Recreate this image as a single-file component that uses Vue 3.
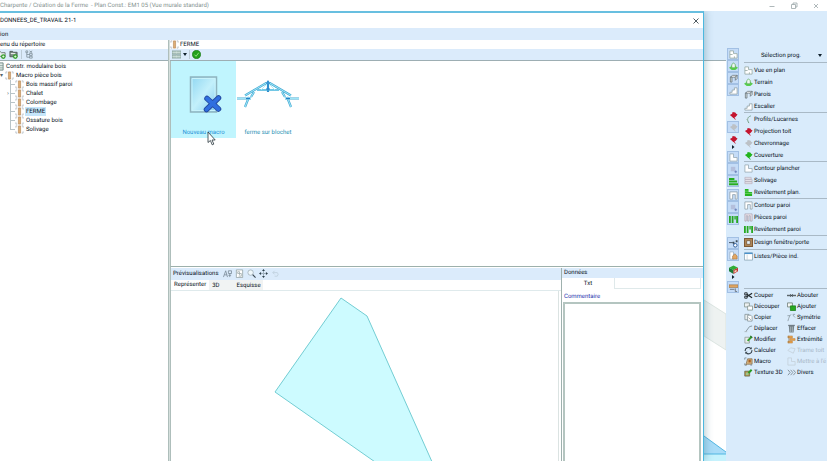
<script setup>
import { ref } from 'vue'

const search = ref('prog')
const comment = ref('')
const selectedNode = ref('FERME')
const activeTab = ref('Représenter')

const pin = (c) =>
  `<path d="M1 4.500 3.500 3 4 1l3 .6 1 1.400 1.500 1-2 2.500L5 8 3 6z" fill="${c}"/><path d="M5.500 7 7 9.500" stroke="${c}" fill="none"/>`

const icons = {
  beam: '<path d="M1 3V1h1.500M7.500 1H9v2M1 7v2h1.500M7.500 9H9V7" fill="none" stroke="#9aa8b2" stroke-width=".7"/><path d="M3.800 1h2.400v8H3.800z" fill="#dfae76" stroke="#ad7d48" stroke-width=".6"/>',
  root: '<path d="M1 1h8v8H1z" fill="#dfe9e6" stroke="#6d8580"/><path d="M1 4h8M1 6.500h8M4 1v8" stroke="#7f9992" stroke-width=".8"/>',
  addFolder: '<path d="M1 2h3l1 1h4v4H1z" fill="#e9f0ee" stroke="#59665f" stroke-width=".9"/><circle cx="7" cy="7.300" r="2.600" fill="#36a02c"/><path d="M7 6v2.600M5.700 7.300h2.600" stroke="#fff" stroke-width=".8"/>',
  filledFolder: '<path d="M1 1.500h3l1 1h4v5H1z" fill="#7c8b86" stroke="#48544f" stroke-width=".9"/><path d="M2 4h5" stroke="#fff"/><circle cx="7" cy="7.300" r="2.600" fill="#36a02c"/><path d="M7 6v2.600M5.700 7.300h2.600" stroke="#fff" stroke-width=".8"/>',
  treeCut: '<path d="M1 1h2v2H1zM2 3v5h3M2 5h3M5 4h3v2H5zM5 7h3v2H5zM5 1l3 2M8 1 5 3" fill="none" stroke="#7f8f99" stroke-width=".9"/>',
  gridView: '<path d="M0 1h10v3.500H0zM0 5.500h10V9H0z" fill="#b5cbc5"/><path d="M0 2.700h10M0 7.300h10M5 1v8" stroke="#d4e2de" stroke-width=".7"/><path d="M0 1h10v3.500H0zM0 5.500h10V9H0z" fill="none" stroke="#7d978f" stroke-width=".7"/>',
  check: '<circle cx="5" cy="5" r="4.700" fill="#23a01c" stroke="#147010" stroke-width=".6"/><path d="M2.800 5.200 4.500 7l3-4" fill="none" stroke="#8fe27c" stroke-width="1.100"/>',
  plan: '<path d="M1 1h4v3h4v5H1z" fill="#fff" stroke="#98a9a5" stroke-width=".9"/><path d="M1 5h3M6 9V7" stroke="#98a9a5" stroke-width=".9"/>',
  terrain: '<path d="M0 6.500 3 4.500h4l3 2L7 9H3z" fill="#58cf4d"/><path d="M5 1 7 3v3.500H3V3z" fill="#eef6f0" stroke="#55a850" stroke-width=".8"/>',
  walls: '<path d="M1.500 3.500 4 1.500h5L7 3.500z" fill="#fff" stroke="#5d6a70" stroke-width=".8"/><path d="M1.500 3.500h1.800V9H1.500zM7 3.500l2-2v3.500L7 7z" fill="#dfe5e5" stroke="#5d6a70" stroke-width=".8"/>',
  stairs: '<path d="M1 9V7h2.500V4.500H6V2h3v7z" fill="#fff" stroke="#8a9a9f" stroke-width=".8"/>',
  profile: '<path d="M7.500 1C3.500 2.500 3 5 5.500 9" fill="none" stroke="#6f9c82" stroke-width="1.100"/><path d="M2.500 5.500 5 3" stroke="#b8c6c0"/>',
  pinRed: pin('#c4152f'),
  pinGrey: pin('#bcc1c6'),
  pinGreen: pin('#22b41d'),
  floor: '<path d="M1 1h4v4h4v4H1z" fill="#fff" stroke="#9aabb5" stroke-width=".9"/>',
  joist: '<path d="M1 1.500h7v2H1zM1 4h8v2H1zM1 6.500h8v2H1z" fill="#eceaf0" stroke="#b2a9b8" stroke-width=".7"/>',
  deck: '<path d="M1 1h4v3.500h4V9H1z" fill="#27b321"/><path d="M1 3.500h4M1 6h8" stroke="#a2eb9a" stroke-width=".6"/>',
  wallOutline: '<path d="M1 1h8v8H7V4H4v5H1z" fill="#fff" stroke="#8a9aa3" stroke-width=".8"/>',
  wallParts: '<path d="M1 1h8v8H7V3H5.500v6H4V3H2.500v6H1z" fill="#eee8ee" stroke="#aaa0ae" stroke-width=".8"/>',
  wallDeck: '<path d="M0 1h2v8H0zM3 1h2v8H3zM6 1h1.500v4H6zM8 1h2v8H8z" fill="#27a822"/>',
  windowDoor: '<path d="M0 0h10v10H0z" fill="#7e5a35"/><path d="M1.200 1.200h7.600v7.600H1.200z" fill="#b48b5b"/><path d="M3 3h4v4H3z" fill="#e9f4fb" stroke="#5d4226" stroke-width=".7"/>',
  lists: '<path d="M.5 1h9v8h-9z" fill="#fff" stroke="#89a5b6" stroke-width=".9"/><path d="M.5 1.500h9" stroke="#4a92cc" stroke-width="1.600"/><path d="M3.500 3v6" stroke="#bccad2" stroke-width=".8"/>',
  cut: '<path d="M3 3.500 9 7.500M3 6.500 9 2.500" stroke="#1f2628" stroke-width="1.300"/><path d="M.8 2h2.700v2.300H.8zM.8 5.800h2.700V8H.8z" fill="none" stroke="#1f2628"/>',
  join: '<path d="M0 5h10" stroke="#5b666b" stroke-width="1.600"/><path d="M3.500 3.500 5 5 3.500 6.500M6.500 3.500 5 5l1.500 1.500" fill="none" stroke="#384246" stroke-width=".8"/>',
  trim: '<path d="M.5 1h5.500v4.500H.5z" fill="#eef1f0" stroke="#85938e" stroke-width=".9"/><path d="M4 4.500h5.500V9H4z" fill="#fff" stroke="#85938e" stroke-width=".9"/>',
  add: '<path d="M.5 1h5.500v4.500H.5z" fill="#f4f7f5" stroke="#6d7b75" stroke-width=".9"/><path d="M3.800 4.300h5.700V9.500H3.800z" fill="#28a91f" stroke="#157a10" stroke-width=".8"/>',
  copy: '<path d="M1 1.500h4.500v6H1z" fill="#e9eeee" stroke="#7c8b90" stroke-width=".8"/><path d="M4 2.500h3.500L9 4v5H4z" fill="#fff" stroke="#7c8b90" stroke-width=".8"/><path d="m5 5 3 3" stroke="#7c8b90" stroke-width=".7"/>',
  mirror: '<path d="M1 9C2 5 3 3 4.500 1.500M9 5C8 4 7 3 6.500 2" fill="none" stroke="#8c9aa2" stroke-width=".9"/><path d="M6.500 1.500H9M.5 3h3" fill="none" stroke="#7f8e96" stroke-width=".8"/>',
  move: '<path d="M2 8.500 6 3l3-.8" fill="none" stroke="#7c8a90" stroke-width=".9"/><path d="M.5 8.500h3" stroke="#a7b2b6" stroke-width=".8"/>',
  erase: '<path d="M2 2h6l-.6 7.500H2.600z" fill="#76838a"/><path d="M1.300 1.500h7.400" stroke="#566269"/><path d="M4 3v6M6 3v6" stroke="#c9d2d6" stroke-width=".6"/>',
  edit: '<path d="M1 2.500h5V9H1z" fill="#e8eceb" stroke="#8a938f" stroke-width=".8"/><path d="M4 6.500 8 2.500" stroke="#2f9e2a" stroke-width="2"/><path d="m7 1 2.200 2.100" stroke="#1c6d1a" stroke-width="1.400"/>',
  extremity: '<path d="M1 1h5v2.300H1zM3 4h6v2H3zM1 6.800h5V9H1z" fill="#e8a24f" stroke="#b97a2e" stroke-width=".5"/><path d="M2 1v8" stroke="#857357" stroke-width=".6"/>',
  calc: '<path d="M1.300 5.500A3.600 3.600 0 0 1 7.700 3M8.700 4.500A3.600 3.600 0 0 1 2.300 7.300" fill="none" stroke="#38444c" stroke-width="1.200"/><path d="M8.600 1v2.600H6zM1.400 9V6.500H4z" fill="#38444c"/>',
  roofGrid: '<path d="M1 5 4 2l5 1-2 5z" fill="none" stroke="#c3d0da" stroke-width=".9"/>',
  macro: '<path d="M2 9 4 2h5v6H4z" fill="#d5b27e" stroke="#7d6a4b" stroke-width=".8"/><path d="M.8 3V1h2M.8 7v2h2M7 9h2" fill="none" stroke="#6f7f86" stroke-width=".8"/><path d="M5 3h2.500v3H5z" fill="#a85f21"/>',
  update: '<path d="M1 1h4v4h4v4H1z" fill="none" stroke="#c5d1da" stroke-width=".9"/>',
  texture: '<path d="M.8 3.500h5.500V9H.8z" fill="#b7873e" stroke="#5e6d50" stroke-width=".8"/><path d="M2 5h3v3H2z" fill="#9cc78c"/><path d="M5 5.500 8.500 2" stroke="#279b22" stroke-width="2.200"/>',
  misc: '<path d="m1 2 2.500 3L1 8M4 2l2.500 3L4 8M7 2l2.500 3L7 8" fill="none" stroke="#8795a0" stroke-width="1.100"/>',
  greenBars: '<path d="M0 1h6v2.200H0zM0 4h9v2.200H0zM0 7h10v2.200H0z" fill="#27ae21"/>',
  dotted: '<path d="M2 2h5v5H2z" fill="#b4bfdc"/><path d="M7.500 6v3M6 7.500h3" stroke="#5b6fae" stroke-width=".8"/>',
  nodes: '<path d="M0 4h4l3 2.500" fill="none" stroke="#3b4b58"/><circle cx="7" cy="7" r="2" fill="#fff" stroke="#2f5f9e" stroke-width="1.100"/><path d="M4 3h2v2H4zM7.500 1.500h2v2h-2z" fill="#3b4b58"/>',
  house: '<path d="M1 1h4v8H1z" fill="#fff" stroke="#8ba3b8" stroke-width=".7"/><path d="M4 5.500 6.500 3 9 5.500V9H4z" fill="#e4a763" stroke="#9e6c33" stroke-width=".6"/>',
  cube: '<path d="m0 3 5-2.500L10 3 5 5.500z" fill="#2fae35"/><path d="m0 3 5 2.500V10L0 7z" fill="#1b7c37"/><path d="m5 5.500 5-2.500v4l-5 3z" fill="#c5342f"/><path d="m6 6.500 2.500-1.200v2L6 8.500z" fill="#f3dbc0"/>',
  rafter: '<path d="M0 2h10v3H0z" fill="#e0a45f" stroke="#8f6c42" stroke-width=".6"/><path d="M1 7h5" stroke="#69727c"/><path d="M7 6v3.500h2" stroke="#69727c" fill="none"/>',
  font: '<path d="M.5 9 3 2l2 7M1.500 6.500h3M6 2h3.500v3H6zM6 7h3M7.500 5v4" fill="none" stroke="#7a8b98" stroke-width=".9"/>',
  page: '<path d="M1.500 1h7v8.500h-7z" fill="#fff" stroke="#8b9a9c" stroke-width=".8"/><path d="M3 3h2v2H3zM5 7V5h2v3H4" fill="none" stroke="#8b9a9c" stroke-width=".7"/>',
  magnifier: '<circle cx="4" cy="4" r="3" fill="#eff8fc" stroke="#9aa8b1" stroke-width=".8"/><path d="M6.300 6.300 9.500 9.500" stroke="#39464f" stroke-width="1.300"/>',
  pan: '<path d="M5 2v6M2 5h6" stroke="#5e707b" stroke-width=".8" stroke-dasharray="1 .7"/><path d="M5 0 6.600 2.300H3.400zM5 10 3.400 7.700h3.200zM0 5l2.300-1.600v3.200zM10 5 7.700 6.600V3.400z" fill="#2c3f4a"/>',
  undo: '<path d="M2 4h5q2 1.500 0 4H4M4 2 2 4l2 2" fill="none" stroke="#c2d3df"/>'
}

const tree = [
  { label: 'Constr. modulaire bois', level: 0, icon: 'root' },
  { label: 'Macro pièce bois', level: 1, icon: 'beam', mark: '▾' },
  { label: 'Bois massif paroi', level: 2, icon: 'beam' },
  { label: 'Chalet', level: 2, icon: 'beam', mark: '›' },
  { label: 'Colombage', level: 2, icon: 'beam' },
  { label: 'FERME', level: 2, icon: 'beam' },
  { label: 'Ossature bois', level: 2, icon: 'beam' },
  { label: 'Solivage', level: 2, icon: 'beam', last: true }
]

const strip = [
  { icons: ['plan', 'terrain', 'walls', 'stairs'], boxed: true },
  { icons: ['pinRed', 'pinGrey', 'pinRed'], middle: true, arrow: true },
  { icons: ['floor', 'dotted', 'greenBars'], boxed: true },
  { icons: ['wallOutline', 'dotted', 'wallDeck'], boxed: true },
  { icons: ['nodes', 'house'], boxed: true },
  { icons: ['cube'], arrow: true },
  { icons: ['rafter'], boxed: true }
]

const programs = [
  [['plan', 'Vue en plan'], ['terrain', 'Terrain'], ['walls', 'Parois'], ['stairs', 'Escalier']],
  [['profile', 'Profils/Lucarnes'], ['pinRed', 'Projection toit'], ['pinGrey', 'Chevronnage'], ['pinGreen', 'Couverture']],
  [['floor', 'Contour plancher'], ['joist', 'Solivage'], ['deck', 'Revêtement plan.']],
  [['wallOutline', 'Contour paroi'], ['wallParts', 'Pièces paroi'], ['wallDeck', 'Revêtement paroi']],
  [['windowDoor', 'Design fenêtre/porte']],
  [['lists', 'Listes/Pièce ind.']]
]

const tools = [
  ['cut', 'Couper'], ['join', 'Abouter'],
  ['trim', 'Découper'], ['add', 'Ajouter'],
  ['copy', 'Copier'], ['mirror', 'Symétrie'],
  ['move', 'Déplacer'], ['erase', 'Effacer'],
  ['edit', 'Modifier'], ['extremity', 'Extrémité'],
  ['calc', 'Calculer'], ['roofGrid', 'Trame toit', true],
  ['macro', 'Macro'], ['update', "Mettre à l'é", true],
  ['texture', 'Texture 3D'], ['misc', 'Divers']
]

const previewTools = ['font', 'page', 'magnifier', 'pan', 'undo']
</script>

<template>
  <div class="app">
    <header class="titlebar">
      <span class="app-title">Charpente / Création de la Ferme &nbsp;- Plan Const.: EM1 05 (Vue murale standard)</span>
      <div class="window-buttons">
        <button aria-label="Réduire"><svg viewBox="0 0 8 8"><path d="M1.500 4.500h5" /></svg></button>
        <button aria-label="Restaurer"><svg viewBox="0 0 8 8"><path d="M1.500 2.500h4v4h-4zM3 2.500V1h4v4H5.500" /></svg></button>
        <button aria-label="Fermer"><svg viewBox="0 0 8 8"><path d="m2 2 4 4M6 2 2 6" /></svg></button>
      </div>
    </header>

    <div class="workspace">
      <section class="dialog">
        <div class="dialog-title">
          <h1>DONNEES_DE_TRAVAIL 21-1</h1>
          <button aria-label="Fermer la fenêtre"><svg viewBox="0 0 8 8"><path d="m1.500 1.500 5 5M6.500 1.500l-5 5" /></svg></button>
        </div>
        <nav class="menubar"><button>ion</button></nav>

        <div class="columns">
          <aside class="directory">
            <h2 class="column-head">enu du répertoire</h2>
            <div class="toolbar directory-tools">
              <button aria-label="Ajouter"><svg class="icon" viewBox="0 0 10 10" v-html="icons.addFolder" /></button>
              <button aria-label="Dossier"><svg class="icon" viewBox="0 0 10 10" v-html="icons.filledFolder" /></button>
              <span class="separator"></span>
              <button aria-label="Arborescence"><svg class="icon" viewBox="0 0 10 10" v-html="icons.treeCut" /></button>
            </div>
            <ul class="tree">
              <li v-for="node in tree" :key="node.label" :class="['level-' + node.level, { last: node.last }]">
                <span v-if="node.level" class="mark">{{ node.mark }}</span>
                <span v-if="node.level === 2" class="branch"></span>
                <svg class="icon" viewBox="0 0 10 10" v-html="icons[node.icon]" />
                <button :class="{ selected: node.label === selectedNode }" @click="selectedNode = node.label">{{ node.label }}</button>
              </li>
            </ul>
          </aside>

          <main class="content">
            <h2 class="column-head path"><svg class="icon" viewBox="0 0 10 10" v-html="icons.beam" />FERME</h2>
            <div class="toolbar content-tools">
              <button aria-label="Affichage"><svg class="icon" viewBox="0 0 10 10" v-html="icons.gridView" /></button>
              <svg class="caret" viewBox="0 0 4 3"><path d="M0 0h4L2 3z" /></svg>
              <span class="separator"></span>
              <button aria-label="Valider"><svg class="icon" viewBox="0 0 10 10" v-html="icons.check" /></button>
            </div>

            <div class="gallery">
              <button class="tile active">
                <svg class="tile-art" viewBox="0 0 62 46">
                  <defs>
                    <linearGradient id="sheet" x1="0" y1="0" x2="1" y2="1">
                      <stop offset="0" stop-color="#8fd6f1" />
                      <stop offset=".5" stop-color="#c3f0fb" />
                      <stop offset="1" stop-color="#84cbef" />
                    </linearGradient>
                  </defs>
                  <path d="M17.500 6h26v35h-26z" fill="url(#sheet)" stroke="#8fb4bf" stroke-width="1.500" />
                  <path d="M19 7.500h23v32H19z" fill="none" stroke="#c9f3fb" />
                  <path d="m34 27.500 11.500 10.500M45.500 27 33.500 38.500" stroke="#23499f" stroke-width="5.500" stroke-linecap="round" />
                  <path d="m34 27.500 11.500 10.500M45.500 27 33.500 38.500" stroke="#2f6fe0" stroke-width="3.800" stroke-linecap="round" />
                </svg>
                <span>Nouveau macro</span>
                <svg class="pointer" viewBox="0 0 9 15"><path d="M1 1v10.500l2.400-2 1.800 4.300 1.600-.7L5 9h3.200z" /></svg>
              </button>
              <button class="tile">
                <svg class="tile-art" viewBox="0 0 62 46">
                  <g fill="none" stroke="#45a9d3" stroke-width="2.200">
                    <path d="M31 11 8 24.500M31 11l23 13.500M0 27.500h14M48 27.500h14M20 19h22M31 10v11M12 26 8 36M50 26l4 10M14 26l3-5M48 26l-3-5" />
                  </g>
                  <g fill="none" stroke="#a8ecfb" stroke-width=".9">
                    <path d="M31 11 8 24.500M31 11l23 13.500M0 27.500h14M48 27.500h14M20 19h22M12 26 8 36M50 26l4 10M14 26l3-5M48 26l-3-5M31 12l-7 7M31 12l7 7" />
                  </g>
                  <path d="M31 9.500V21M29 12h4M29 18h4M9 27.500h4M49 27.500h4" stroke="#227fc9" stroke-width="1.200" />
                </svg>
                <span>ferme sur blochet</span>
              </button>
            </div>

            <div class="details">
              <section class="preview">
                <div class="preview-head">
                  <h2>Prévisualisations</h2>
                  <button v-for="name in previewTools" :key="name" :aria-label="name"><svg class="icon" viewBox="0 0 10 10" v-html="icons[name]" /></button>
                </div>
                <div class="tabs">
                  <button v-for="tab in ['Représenter', '3D', 'Esquisse']" :key="tab" :class="{ current: tab === activeTab }" @click="activeTab = tab">{{ tab }}</button>
                </div>
                <div class="drawing">
                  <svg viewBox="0 0 388 170"><path d="m170 7 26 18 66 148-55 0L104 101z" /></svg>
                </div>
              </section>

              <section class="data">
                <h2>Données</h2>
                <div class="data-tabs"><button>Txt</button><span></span></div>
                <label for="comment">Commentaire</label>
                <textarea id="comment" v-model="comment"></textarea>
              </section>
            </div>
          </main>
        </div>
      </section>

      <div class="backdrop">
        <svg viewBox="0 0 22 400" preserveAspectRatio="xMidYMax slice">
          <path d="M0 239 22 253v36L0 275z" fill="#eef2f1" stroke="#d5dfdc" stroke-width=".8" />
          <path d="m0 375 22 16v9H0z" fill="#a9dcf8" />
          <path d="M0 393h22v7H0z" fill="#c6f2fd" />
          <path d="m0 375 22 16M0 393h22" fill="none" stroke="#45b0df" stroke-width=".9" />
        </svg>
      </div>

      <aside class="side">
        <div class="strip">
          <div v-for="(group, g) in strip" :key="g" class="strip-group">
            <button v-for="(name, i) in group.icons" :key="i" :class="{ boxed: group.boxed || (group.middle && i === 1) }" :aria-label="name">
              <svg class="icon" viewBox="0 0 10 10" v-html="icons[name]" />
            </button>
            <svg v-if="group.arrow" class="more" viewBox="0 0 4 4"><path d="m1 0 2.500 2L1 4z" /></svg>
          </div>
        </div>

        <div class="panel">
          <div class="picker">
            <select v-model="search" aria-label="Programme"><option value="prog">Sélection prog.</option></select>
            <svg class="caret" viewBox="0 0 4 3"><path d="M0 0h4L2 3z" /></svg>
          </div>
          <div v-for="(group, g) in programs" :key="g" class="group">
            <button v-for="[name, label] in group" :key="label" class="entry"><svg class="icon" viewBox="0 0 10 10" v-html="icons[name]" />{{ label }}</button>
          </div>
          <div class="tools">
            <button v-for="[name, label, off] in tools" :key="label" class="entry" :disabled="off"><svg class="icon" viewBox="0 0 10 10" v-html="icons[name]" />{{ label }}</button>
          </div>
        </div>
      </aside>
    </div>
  </div>
</template>

<style>
body {
  margin: 0;
}
</style>

<style scoped>
.app {
  display: flex;
  flex-direction: column;
  height: 100vh;
  overflow: hidden;
  background: #fff;
  color: #06101a;
  font-family: Roboto, "Open Sans", sans-serif;
  font-size: 6px;
  line-height: 9px;
  text-rendering: geometricPrecision;
}
.app * {
  box-sizing: border-box;
}
button,
select,
textarea {
  margin: 0;
  padding: 0;
  border: 0;
  border-radius: 0;
  background: none;
  color: inherit;
  font: inherit;
  text-rendering: inherit;
  white-space: nowrap;
}
h1,
h2,
ul {
  margin: 0;
  padding: 0;
  font-size: 6px;
  font-weight: 400;
  list-style: none;
}
svg {
  display: block;
  flex: none;
}
.icon {
  width: 9px;
  height: 9px;
}
.caret {
  width: 4px;
  height: 3px;
  fill: #10202c;
}
.titlebar {
  display: flex;
  flex: none;
  justify-content: space-between;
  align-items: center;
  height: 11px;
  padding-right: 7px;
  color: #84928f;
}
.app-title {
  white-space: nowrap;
}
.window-buttons {
  display: flex;
  gap: 14px;
}
.window-buttons svg,
.dialog-title svg {
  width: 8px;
  height: 8px;
  fill: none;
  stroke: #9aa6a8;
  stroke-width: .8;
}
.workspace {
  display: flex;
  flex: 1;
  min-height: 0;
  background: #d9ebfb;
}
.dialog {
  position: relative;
  display: flex;
  flex: 1;
  flex-direction: column;
  min-width: 0;
  border-top: 2px solid #68bfe0;
  border-right: 1px solid #4bb8df;
  background: #fff;
  box-shadow: 1px 0 8px rgba(60, 120, 135, .4);
  clip-path: inset(0 -10px 0 0);
}
.dialog-title {
  display: flex;
  flex: none;
  justify-content: space-between;
  align-items: center;
  height: 15px;
  padding-right: 3px;
}
.dialog-title svg {
  stroke: #23323b;
}
.menubar {
  display: flex;
  flex: none;
  align-items: center;
  height: 12px;
  background: #dbebfb;
}
.columns {
  display: flex;
  flex: 1;
  min-height: 0;
}
.directory {
  width: 169px;
  border-right: 1px solid #aebebb;
}
.column-head {
  display: flex;
  align-items: center;
  height: 9px;
}
.path {
  gap: 1px;
}
.toolbar {
  display: flex;
  align-items: center;
  height: 12px;
  border-bottom: 1px solid #9daeb3;
  background: #dbebfb;
}
.directory-tools {
  gap: 3px;
  margin-left: -3px;
}
.content-tools {
  gap: 2px;
  padding-left: 2px;
}
.separator {
  width: 1px;
  height: 9px;
  background: #bccbd6;
}
.tree {
  padding-top: 1px;
}
.tree li {
  display: flex;
  align-items: center;
  height: 9px;
}
.tree .level-0 {
  gap: 1px;
  margin-left: -5px;
}
.tree button {
  height: 9px;
  padding: 0 1px;
}
.tree .level-1 button,
.tree .level-2 button {
  margin-left: 1px;
}
.tree .selected {
  background: #c5e6fb;
}
.mark {
  width: 5px;
  color: #58666c;
}
.level-2 .mark {
  padding-left: 7px;
  width: 10px;
}
.branch {
  width: 5px;
  height: 9px;
  background: linear-gradient(#b9c4c8, #b9c4c8) 0 0 / 1px 9px no-repeat, linear-gradient(#b9c4c8, #b9c4c8) 0 4px / 5px 1px no-repeat;
}
.last .branch {
  background-size: 1px 5px, 5px 1px;
}
.content {
  display: flex;
  flex: 1;
  flex-direction: column;
  min-width: 0;
  border-left: 1px solid #d5dfdc;
}
.gallery {
  display: flex;
  flex: 206;
  align-items: flex-start;
  min-height: 0;
  border-bottom: 1px solid #9db0ab;
  border-left: 1px solid #aebebb;
}
.tile {
  position: relative;
  display: flex;
  flex-direction: column;
  align-items: center;
  width: 64px;
  height: 77px;
  padding-top: 10px;
  color: #2691b3;
}
.tile.active {
  width: 65px;
  background: #c0f5fe;
  color: #1f8fd6;
}
.tile-art {
  width: 62px;
  height: 46px;
  margin-bottom: 11px;
}
.pointer {
  position: absolute;
  top: 70px;
  left: 36px;
  z-index: 1;
  width: 9px;
  height: 15px;
  fill: #fff;
  stroke: #26343a;
  stroke-width: .8;
}
.details {
  display: flex;
  flex: 194;
  min-height: 0;
  padding-top: 1px;
  border-left: 1px solid #aebebb;
}
.preview {
  display: flex;
  flex: 1;
  flex-direction: column;
  min-width: 0;
}
.preview-head {
  display: flex;
  flex: none;
  align-items: center;
  gap: 3px;
  height: 12px;
  padding-left: 2px;
  background: #dbebfb;
}
.preview-head h2 {
  margin-right: 2px;
}
.tabs {
  display: flex;
  flex: none;
  height: 11px;
  border-bottom: 1px solid #dfeaec;
}
.tabs button {
  padding: 1px 14px 0 3px;
  background: #f1f3f3;
}
.tabs button.current {
  padding: 0 3px 2px;
  background: #fff;
}
.tabs button:last-child {
  padding: 1px 2px 0 3px;
}
.drawing {
  flex: 1;
  min-height: 0;
  margin-right: 2px;
  border-right: 1px solid #dbe3e2;
  overflow: hidden;
}
.drawing svg {
  width: 388px;
  height: 170px;
  fill: #cdfbff;
  stroke: #73cdd3;
}
.data {
  display: flex;
  flex-direction: column;
  width: 142px;
  padding-right: 2px;
  border-left: 1px solid #9fb1ae;
}
.data h2 {
  flex: none;
  height: 10px;
  margin-right: -2px;
  padding-left: 2px;
  background: #dbebfb;
}
.data-tabs {
  display: flex;
  flex: none;
  height: 11px;
}
.data-tabs button {
  width: 52px;
}
.data-tabs span {
  flex: 1;
  border: 1px solid #dfe9ea;
  border-top: 0;
}
.data label {
  padding: 3px 2px 1px;
  color: #2731ad;
}
.data textarea {
  flex: 1;
  min-height: 0;
  margin-left: 1px;
  border: 2px solid #b4c5c0;
  border-bottom: 0;
  resize: none;
}
.backdrop {
  width: 22px;
  margin-top: 49px;
  border-top: 1px solid #9daeb3;
  background: #fff;
}
.backdrop svg {
  width: 100%;
  height: 100%;
}
.side {
  display: flex;
  gap: 5px;
  width: 101px;
  padding-top: 37px;
  padding-left: 1px;
  background: #d9ebfb;
}
.strip {
  flex: none;
  width: 12px;
}
.strip-group {
  display: flex;
  flex-direction: column;
  align-items: center;
  margin-bottom: 2px;
}
.strip-group:first-child {
  margin-bottom: 13px;
}
.strip-group:nth-child(4) {
  margin-bottom: 12px;
}
.strip-group button {
  display: grid;
  place-items: center;
  width: 12px;
  height: 12px;
}
.strip-group .boxed {
  border: 1px solid #a2c0e4;
  background: #c5dcf7;
}
.more {
  width: 4px;
  height: 4px;
  fill: #10202c;
}
.panel {
  flex: 1;
  min-width: 0;
  overflow: hidden;
}
.picker {
  display: flex;
  align-items: center;
  height: 14px;
  padding-right: 5px;
}
.picker select {
  flex: 1;
  min-width: 0;
  appearance: none;
  text-align-last: center;
}
.group {
  display: flex;
  flex-direction: column;
  justify-content: center;
  min-height: 14px;
  border-top: 1px solid #a9b9c6;
}
.group:nth-child(2) {
  padding-top: 1px;
}
.entry {
  display: flex;
  align-items: center;
  gap: 1px;
  height: 12px;
}
.tools {
  display: grid;
  grid-template-columns: 43px 1fr;
  margin-top: 25px;
  padding-top: 1px;
  border-top: 1px solid #a9b9c6;
}
.tools .entry {
  height: 11px;
}
.entry:disabled {
  color: #a9b9c9;
}
</style>
